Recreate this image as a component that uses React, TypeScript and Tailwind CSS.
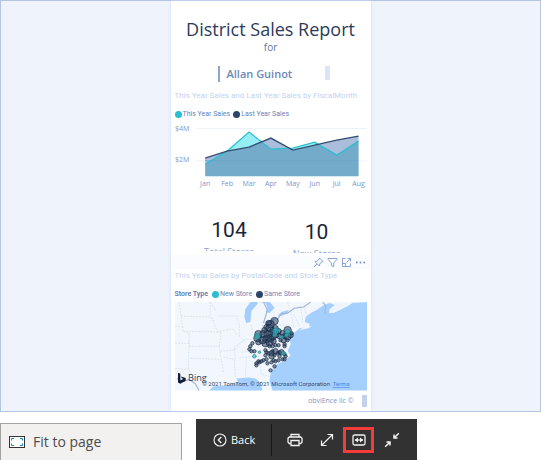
const MONTHS = ["Jan", "Feb", "Mar", "Apr", "May", "Jun", "Jul", "Aug"]
const THIS_YEAR = [44, 31, 12, 29, 28, 22, 35, 21]
const LAST_YEAR = [38, 31, 27, 18, 30, 25, 20, 16]

// [x, y, radius]
const SAME_STORES = [
  [99, 19, 4], [95, 22, 4], [93, 21, 3], [91, 25, 3], [94, 26, 4], [89, 28, 3],
  [97, 28, 3], [100, 26, 3], [88, 32, 4], [92, 32, 4], [96, 31, 4], [100, 32, 4],
  [103, 29, 3], [83, 32, 4], [82, 36, 4], [87, 38, 4], [91, 37, 4], [95, 36, 4],
  [98, 35, 3], [83, 40, 3], [90, 41, 4], [94, 40, 4], [98, 39, 3], [104, 34, 3],
  [107, 31, 3], [112, 28, 4], [109, 34, 3], [112, 34, 4], [115, 33, 3], [108, 38, 3],
  [112, 38, 2], [105, 38, 2], [116, 31, 2], [109, 42, 2], [109, 44, 2], [77, 41, 2],
  [75, 44, 2], [74, 47, 2], [76, 49, 2], [79, 49, 2], [100, 43, 2], [103, 43, 2],
  [97, 44, 2], [94, 44, 2], [90, 48, 2], [91, 50, 2], [90, 53, 2], [93, 51, 2],
  [96, 51, 3], [97, 49, 2], [100, 49, 3], [99, 53, 2], [102, 51, 2], [104, 50, 2],
  [106, 50, 3], [109, 52, 2], [96, 54, 3], [104, 54, 2], [110, 54, 2], [107, 57, 2],
  [109, 57, 2], [103, 58, 2], [100, 59, 2], [98, 58, 2], [96, 60, 2], [92, 61, 2],
  [91, 57, 2], [88, 58, 2], [86, 59, 2], [83, 59, 2], [81, 61, 2], [81, 63, 2],
  [84, 60, 2], [99, 64, 2], [95, 68, 2],
]
const NEW_STORES = [
  [82, 34, 3], [101, 27, 2], [100, 29, 3], [112, 30, 3], [111, 33, 2], [106, 35, 2],
  [84, 50, 1.5], [79, 54, 2], [108, 51, 2], [99, 33, 2],
]

const px = (i: number) => 30 + i * 21.8
const line = (values: number[]) => values.map((v, i) => `${px(i)},${v}`).join(" ")
const area = (values: number[]) => `${px(0)},56 ${line(values)} ${px(values.length - 1)},56`

function Legend({ label, color }: { label: string; color: string }) {
  return (
    <span className="flex items-center gap-px">
      <span className={`size-[7px] rounded-full ${color}`} />
      {label}
    </span>
  )
}

function SalesChart() {
  return (
    <svg viewBox="0 0 191 68" className="w-full" role="img" aria-label="Sales by fiscal month">
      <path d="M21 8.5H191M21 40.5H191" stroke="#edf2fb" />
      <polygon points={area(THIS_YEAR)} fill="#96eef4" />
      <polygon points={area(LAST_YEAR)} fill="#aabddb" />
      {/* region covered by both series */}
      <clipPath id="both">
        <polygon points={area(THIS_YEAR)} />
      </clipPath>
      <polygon points={area(LAST_YEAR)} fill="#75abca" clipPath="url(#both)" />
      <path d="M30 40.5H182" stroke="#6ea3c4" />
      <polyline points={line(THIS_YEAR)} fill="none" stroke="#29bfd0" strokeWidth="1.3" />
      <polyline points={line(LAST_YEAR)} fill="none" stroke="#344d70" strokeWidth="1.3" />
      <g fill="#7b96c9" fontSize="7">
        <text x="0" y="11">$4M</text>
        <text x="0" y="42">$2M</text>
        {MONTHS.map((m, i) => (
          <text key={m} x={px(i)} y="66" textAnchor="middle">{m}</text>
        ))}
      </g>
    </svg>
  )
}

function StoreMap() {
  return (
    <svg viewBox="0 0 191 88" className="block w-full" role="img" aria-label="Map of stores">
      <rect width="191" height="88" fill="#f2f7fd" />
      <path d="M191 0H178L172 4L160 10L153 11L154 7L159 3L154 1L148 3L141 8L135 11L130 15L129 20L134 22L133 25L124 26L118 31L114 37L115 42L112 49L115 53L109 59L101 62L97 67L95 72L94 78L97 88H191Z" fill="#a5d0fd" />
      <path d="M191 0H174L166 4L158 11L153 11L158 4L167 1Z" fill="#edf4fd" />
      <path d="M128 25L136 24L133 26L124 28Z" fill="#eef5fd" />
      <path d="M34 88L38 84L48 83L56 82L63 80L61 76L73 75L80 76L85 80L87 88Z" fill="#a5d0fd" />
      <path d="M75 0L70 7L69 15L71 21L75 20L76 9L82 2L82 0ZM83 0L90 1L92 6L90 10L94 11L99 6L96 2L94 0ZM89 21L95 18L101 15L98 19L92 23ZM102 14L106 10L113 8L112 11L106 14Z" fill="#a5cdfb" />
      <g fill="none" stroke="#d0dbeb" strokeWidth="0.7" strokeDasharray="2 1">
        <path d="M4 0L6 14L8 29L14 31L14 44L13 67M6 14L35 15L40 20M35 0L35 15M8 29L46 30M14 44L44 44L48 70M46 30L44 44M0 41H14M36 15L42 29L58 27L62 34M35 0L41 9M42 14H64M48 55L59 57L60 75M60 57L59 45L70 37L80 38M45 49L59 48L67 40M61 16L64 20L64 34L71 40M64 55L88 54M70 75L71 56M83 55L86 72L94 74M88 54L94 61M76 23L77 36M87 23L88 37M66 50L108 46M98 23L113 23L116 29M112 0L116 13L118 25M118 12L124 24M125 4L127 20M0 66L14 67L20 79M0 24L8 25M128 4L132 15M44 57L14 56" />
      </g>
      <path d="M88 0L92 8L88 21M102 18L105 12L112 11L119 6L128 5L135 0M147 0L150 4L149 12M2 76L9 79L14 77L20 81L24 88" fill="none" stroke="#a4b7d9" strokeWidth="1.2" />
      <g stroke="#10233d" strokeOpacity="0.8" strokeWidth="0.8">
        {SAME_STORES.map(([cx, cy, r], i) => (
          <circle key={i} cx={cx} cy={cy} r={r - 0.3} fill="#2c405e" fillOpacity="0.55" />
        ))}
        {NEW_STORES.map(([cx, cy, r], i) => (
          <circle key={i} cx={cx} cy={cy} r={r - 0.2} fill="#2bbcbf" fillOpacity="0.7" stroke="#237b8c" />
        ))}
      </g>
      <path d="M3 70.5L5.3 71.3V78L8.2 76.5L6.6 75.7L5.9 74L10.6 75.7V78.3L5.3 81.3L3 80Z" fill="#101c35" />
      <text x="13" y="79" fontSize="9" fill="#2c3e60">Bing</text>
      <g fontSize="6" fill="#35496c" className="font-['Roboto']">
        <text x="27" y="84">© 2021 TomTom, © 2021 Microsoft Corporation</text>
        <a href="#terms">
          <text x="157" y="84" fill="#4d7fe6" textDecoration="underline">Terms</text>
        </a>
      </g>
    </svg>
  )
}

function StatCard({ value, label }: { value: string; label: string }) {
  return (
    <div className="flex w-[88px] flex-col items-center">
      <span className="font-['Roboto'] text-[21px] leading-6 text-[#1c2538]">{value}</span>
      <span className="mt-1 h-[5px] overflow-hidden text-[9px] leading-3 text-[#8ba2ca]">{label}</span>
    </div>
  )
}

function VisualActions() {
  const icon = "block size-[11px] fill-none stroke-[#829bd0]"
  return (
    <div className="flex h-[14px] items-center justify-end gap-[3px] bg-[#fbfcff] pr-[5px]">
      <button aria-label="Pin visual">
        <svg viewBox="0 0 11 11" className={icon}>
          <path d="M6.5 1L10 4.5L8.5 5L6.8 7L6.3 9L2 4.7L4 4.2L6 2.5ZM4 7L1 10" strokeWidth="0.9" />
        </svg>
      </button>
      <button aria-label="Filters">
        <svg viewBox="0 0 11 11" className={icon}>
          <path d="M1 1.5H10V2.3L6.7 6V9.8L4.3 8.5V6L1 2.3Z" strokeWidth="0.9" />
        </svg>
      </button>
      <button aria-label="Focus mode">
        <svg viewBox="0 0 11 11" className={icon}>
          <path d="M4.5 1.5H1.5V9.5H9.5V6.5M1.5 6.5H4.5V9.5M5.5 5.5L9.5 1.5M6.5 1.5H9.5V4.5" strokeWidth="0.9" />
        </svg>
      </button>
      <button aria-label="More options">
        <svg viewBox="0 0 11 11" className="block size-[11px] fill-[#6f8bc6]">
          <circle cx="1.8" cy="5.5" r="0.9" />
          <circle cx="5.5" cy="5.5" r="0.9" />
          <circle cx="9.2" cy="5.5" r="0.9" />
        </svg>
      </button>
    </div>
  )
}

function Report() {
  return (
    <main className="flex justify-center border border-[#b4c4e4] bg-[#eef3fc]">
      <article className="w-[200px] bg-white pb-1 shadow-[0_0_3px_#cfe1fa]">
        <header className="pt-4 text-center">
          <h1 className="text-[18px] leading-6 text-[#2b3b5c]">District Sales Report</h1>
          <p className="text-[10px] leading-3 text-[#5e769f]">for</p>
        </header>
        <div className="mt-[13px] flex items-start justify-between pr-[41px] pl-[47px]">
          <span className="border-l-2 border-[#8ea6cd] pl-[7px] text-[11px] leading-4 font-semibold text-[#6e88b5]">
            Allan Guinot
          </span>
          <span className="h-[14px] w-[5px] bg-[#d9e4f5]" />
        </div>
        <section className="mt-2 px-1">
          <h2 className="font-['Roboto'] text-[8px] leading-3 whitespace-nowrap text-[#bfd3f2]">
            This Year Sales and Last Year Sales by FiscalMonth
          </h2>
          <div className="mt-[6px] flex gap-[3px] font-['Roboto'] text-[7px] leading-3 text-[#6684bb]">
            <Legend label="This Year Sales" color="bg-[#29bfd0]" />
            <Legend label="Last Year Sales" color="bg-[#2c4466]" />
          </div>
          <SalesChart />
        </section>
        <section className="mt-[30px] flex h-[37px] items-start justify-between pr-[10px] pl-[15px]">
          <StatCard value="104" label="Total Stores" />
          <div className="pt-[2px]">
            <StatCard value="10" label="New Stores" />
          </div>
        </section>
        <VisualActions />
        <section className="px-1">
          <h2 className="font-['Roboto'] text-[8px] leading-[14px] text-[#bfd3f2]">
            This Year Sales by PostalCode and Store Type
          </h2>
          <div className="mt-[5px] mb-[2px] flex gap-1 font-['Roboto'] text-[7px] leading-3 text-[#6684bb]">
            <span className="font-semibold text-[#5d78ab]">Store Type</span>
            <Legend label="New Store" color="bg-[#29bfd0]" />
            <Legend label="Same Store" color="bg-[#2c4466]" />
          </div>
          <StoreMap />
        </section>
        <footer className="mt-1 flex items-center justify-end gap-2 pr-1 text-[7px] leading-3 text-[#7b96c4]">
          obviEnce llc ©
          <span className="h-3 w-[5px] bg-[#c3d2ec]" />
        </footer>
      </article>
    </main>
  )
}

function Toolbar() {
  const icon = "block size-4 fill-none stroke-[#f3f3f3]"
  return (
    <nav className="flex h-[42px] items-center bg-[#323232] pr-[17px] pl-4 text-white">
      <button className="flex items-center gap-[3px] pr-4 text-[11px] leading-4 font-medium">
        <svg viewBox="0 0 16 16" className={icon}>
          <circle cx="8" cy="8" r="6" strokeWidth="1.1" />
          <path d="M9.3 5L6.3 8L9.3 11" strokeWidth="1.3" />
        </svg>
        Back
      </button>
      <span className="h-8 w-px bg-[#161616]" />
      <button aria-label="Print" className="ml-[15px]">
        <svg viewBox="0 0 16 16" className={icon}>
          <path d="M4 5V2.5H12V5M4 11.5H2.3L1 10.2V6.3L2.3 5H13.7L15 6.3V10.2L13.7 11.5H12M4 8.5H12V13.5H4Z" strokeWidth="1.3" />
        </svg>
      </button>
      <button aria-label="Full screen" className="ml-4">
        <svg viewBox="0 0 16 16" className={icon}>
          <path d="M2.5 13.5L13.5 2.5M8.5 2.5H13.5V7.5M2.5 8.5V13.5H7.5" strokeWidth="1.2" />
        </svg>
      </button>
      <button aria-label="Fit to width" className="ml-2 flex h-[26px] w-[31px] items-center justify-center border-3 border-[#f43c3c]">
        <svg viewBox="0 0 16 16" className={icon}>
          <rect x="2" y="3" width="12" height="10" rx="1.5" strokeWidth="1.3" />
          <path d="M4 8H12" strokeWidth="1.2" />
          <path d="M3.8 8L7 5.5V10.5ZM12.2 8L9 5.5V10.5Z" className="fill-[#f3f3f3] stroke-none" />
        </svg>
      </button>
      <button aria-label="Exit full screen" className="ml-[10px]">
        <svg viewBox="0 0 16 16" className={icon}>
          <path d="M14.8 1.2L10 6M10 2.5V6H13.5M1.2 14.8L6 10M2.5 10H6V13.5" strokeWidth="1.5" />
        </svg>
      </button>
    </nav>
  )
}

export default function App() {
  return (
    <div className="bg-white font-['Open_Sans','Noto_Sans',sans-serif]">
      <Report />
      <div className="flex items-end gap-[14px] pt-[7px]">
        <button className="flex h-[38px] w-[182px] items-center gap-2 border border-[#a3a3a3] bg-[#f2f1f0] pl-2 text-[14px] text-[#4c4c4c]">
          <svg viewBox="0 0 16 12" className="h-3 w-4 fill-none">
            <rect x="0.5" y="0.5" width="15" height="11" fill="#fff" stroke="#333" />
            <path d="M2.5 4.5V2.5H5M11 2.5H13.5V4.5M13.5 7.5V9.5H11M5 9.5H2.5V7.5" stroke="#1688cf" />
          </svg>
          Fit to page
        </button>
        <Toolbar />
      </div>
    </div>
  )
}
